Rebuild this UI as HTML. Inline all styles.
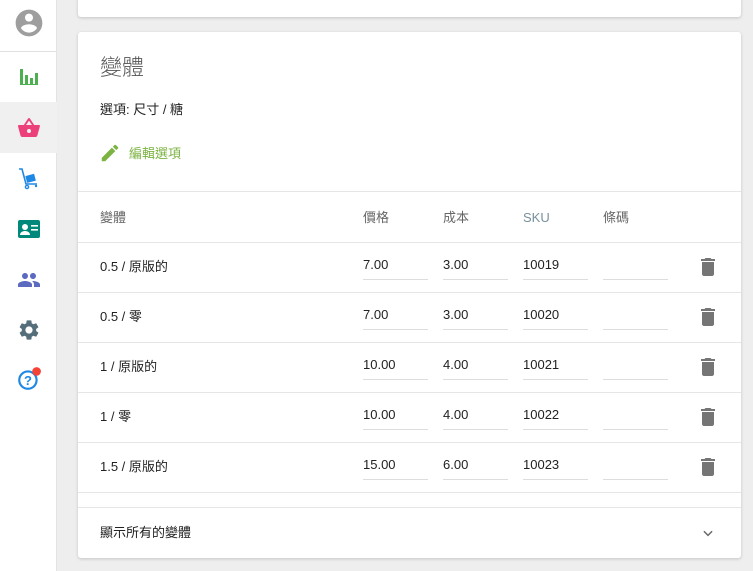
<!DOCTYPE html>
<html><head><meta charset="utf-8"><style>
*{box-sizing:border-box;margin:0;padding:0}
body{width:753px;height:571px;overflow:hidden;background:#eeeeee;font-family:"Liberation Sans","Noto Sans CJK TC",sans-serif;position:relative;color:#222}
.side{position:absolute;left:0;top:0;width:57px;height:571px;background:#fff;border-right:1px solid #e4e4e4}
.ic{position:absolute;left:0;width:57px;height:51px;display:flex;align-items:center;justify-content:center}
.card{position:absolute;left:78px;width:663px;background:#fff;border-radius:3px;box-shadow:0 1px 3px rgba(0,0,0,.18)}
.abs{position:absolute;line-height:16px;white-space:nowrap}
.hr{position:absolute;left:0;right:0;height:1px;background:#e6e6e6}
.t13{font-size:13px}
.inp{position:absolute;width:65px;height:1px;background:#ddd}
</style></head><body>
<div class="side">
 <div class="ic" style="top:0;height:46px"><svg width="32" height="32" viewBox="0 0 24 24"><path fill="#9e9e9e" d="M12 2C6.48 2 2 6.48 2 12s4.48 10 10 10 10-4.48 10-10S17.52 2 12 2zm0 3c1.66 0 3 1.34 3 3s-1.34 3-3 3-3-1.34-3-3 1.34-3 3-3zm0 14.2c-2.5 0-4.710-1.28-6-3.22.03-1.99 4-3.08 6-3.08 1.99 0 5.970 1.09 6 3.08-1.29 1.94-3.5 3.22-6 3.22z"/></svg></div>
 <div class="hr" style="top:51px;background:#e0e0e0"></div>
 <div class="ic" style="top:51px"><svg width="20" height="20" viewBox="0 0 20 20"><path fill="#4caf50" d="M1 2h3v16H1zM6 8h3v10H6zM11 11h3v7h-3zM16 6h3v12h-3z"/><path fill="#4caf50" d="M1 17h18v1H1z"/></svg></div>
 <div class="ic" style="top:102px;background:#f0f0f0"><svg width="24" height="24" viewBox="0 0 24 24"><path fill="#ec407a" d="M17.2 9l-4.4-6.6a1 1 0 00-1.6 0L6.8 9H2a1 1 0 00-1 1.3l2.5 9.3c.2.8 1 1.4 1.900 1.4h13c.9 0 1.7-.6 1.9-1.4l2.6-9.3A1 1 0 0022 9h-4.8zM9 9l3-4.4L15 9H9zm3 8a2 2 0 110-4 2 2 0 010 4z"/></svg></div>
 <div class="ic" style="top:153px"><svg width="24" height="24" viewBox="0 0 24 24"><path fill="none" stroke="#1e88e5" stroke-width="1.6" d="M2 2h3l4 15h11"/><rect x="9" y="8" width="9" height="7" fill="#1e88e5" transform="rotate(-15 13 11)"/><circle cx="10" cy="20" r="1.6" fill="none" stroke="#1e88e5" stroke-width="1.4"/><circle cx="19" cy="19" r="1.2" fill="#1e88e5"/></svg></div>
 <div class="ic" style="top:203px"><svg width="22" height="18" viewBox="0 0 22 18"><rect width="22" height="18" rx="2" fill="#00897b"/><circle cx="7" cy="7" r="3" fill="#fff"/><path fill="#fff" d="M2 15c0-3 3-4 5-4s5 1 5 4z"/><rect x="13" y="5" width="7" height="1.6" fill="#fff"/><rect x="13" y="9" width="7" height="1.6" fill="#fff"/></svg></div>
 <div class="ic" style="top:254px"><svg width="24" height="24" viewBox="0 0 24 24"><path fill="#5c6bc0" d="M16 11c1.66 0 2.99-1.34 2.99-3S17.66 5 16 5c-1.66 0-3 1.34-3 3s1.34 3 3 3zm-8 0c1.66 0 2.99-1.34 2.99-3S9.66 5 8 5C6.34 5 5 6.34 5 8s1.34 3 3 3zm0 2c-2.33 0-7 1.17-7 3.5V19h14v-2.5c0-2.33-4.67-3.5-7-3.5zm8 0c-.29 0-.62.02-.97.05 1.16.84 1.97 1.97 1.97 3.45V19h6v-2.5c0-2.33-4.67-3.5-7-3.5z"/></svg></div>
 <div class="ic" style="top:304px"><svg width="24" height="24" viewBox="0 0 24 24"><path fill="#546e7a" d="M19.14 12.94c.04-.3.06-.61.06-.94 0-.32-.02-.64-.07-.94l2.03-1.58a.49.49 0 00.12-.61l-1.92-3.32a.488.488 0 00-.59-.22l-2.39.96c-.5-.38-1.030-.7-1.62-.94l-.36-2.54a.484.484 0 00-.48-.41h-3.84c-.24 0-.43.17-.47.41l-.36 2.54c-.59.24-1.13.57-1.62.94l-2.39-.96a.49.49 0 00-.59.22L2.74 8.87c-.12.21-.08.47.12.61l2.03 1.58c-.05.3-.09.63-.09.94s.02.64.07.94l-2.03 1.58a.49.49 0 00-.12.61l1.92 3.32c.12.22.37.29.59.22l2.39-.96c.5.38 1.03.7 1.62.94l.36 2.54c.05.24.24.41.48.41h3.84c.24 0 .44-.17.47-.41l.36-2.54c.59-.24 1.13-.56 1.62-.94l2.39.96c.22.08.47 0 .59-.22l1.920-3.32c.12-.22.07-.47-.12-.61l-2.01-1.58zM12 15.6c-1.98 0-3.6-1.62-3.6-3.6s1.62-3.6 3.6-3.6 3.6 1.62 3.6 3.6-1.62 3.6-3.6 3.6z"/></svg></div>
 <div class="ic" style="top:353px"><svg width="26" height="26" viewBox="0 0 24 24"><circle cx="11" cy="13" r="8" fill="none" stroke="#1e88e5" stroke-width="2"/><text x="11" y="17.5" font-size="12" font-weight="bold" fill="#1e88e5" text-anchor="middle" font-family="Liberation Sans">?</text><circle cx="19" cy="5" r="4" fill="#f44336"/></svg></div>
</div>
<div class="card" style="top:-5px;height:22px"></div>
<div class="card" style="top:32px;height:526px">
 <div class="abs" style="left:22px;top:23px;font-size:22px;line-height:26px;color:#555;font-weight:300">變體</div>
 <div class="abs t13" style="left:22px;top:70px">選項: 尺寸 / 糖</div>
 <div class="abs" style="left:21px;top:110px"><svg width="22" height="22" viewBox="0 0 24 24"><path fill="#7cb342" d="M3 17.25V21h3.75L17.81 9.94l-3.75-3.75L3 17.25zM20.71 7.04a1 1 0 000-1.41l-2.34-2.34a1 1 0 00-1.41 0l-1.83 1.83 3.75 3.75 1.83-1.83z"/></svg></div>
 <div class="abs t13" style="left:51px;top:114px;color:#7cb342">編輯選項</div>
 <div class="hr" style="top:159px"></div>
 <div class="abs t13" style="left:22px;top:178px;color:#666">變體</div>
 <div class="abs t13" style="left:285px;top:178px;color:#666">價格</div>
 <div class="abs t13" style="left:365px;top:178px;color:#666">成本</div>
 <div class="abs t13" style="left:445px;top:178px;color:#78909c">SKU</div>
 <div class="abs t13" style="left:525px;top:178px;color:#666">條碼</div>
 <div class="hr" style="top:210px"></div>
 <div id="rows"></div>
 <div class="hr" style="top:475px"></div>
 <div class="abs t13" style="left:22px;top:493px">顯示所有的變體</div>
 <div class="abs" style="left:623px;top:494px"><svg width="14" height="14" viewBox="0 0 24 24"><path fill="none" stroke="#666" stroke-width="2.5" d="M5 9l7 7 7-7"/></svg></div>
</div>
<script>
var d=[["0.5 / 原版的","7.00","3.00","10019"],["0.5 / 零","7.00","3.00","10020"],["1 / 原版的","10.00","4.00","10021"],["1 / 零","10.00","4.00","10022"],["1.5 / 原版的","15.00","6.00","10023"]];
var h="";d.forEach(function(r,i){var t=210+i*50;
h+='<div class="abs t13" style="left:22px;top:'+(t+17)+'px">'+r[0]+'</div>';
[[285,r[1]],[365,r[2]],[445,r[3]],[525,""]].forEach(function(c){h+='<div class="abs t13" style="left:'+c[0]+'px;top:'+(t+15)+'px">'+c[1]+'</div><div class="inp" style="left:'+c[0]+'px;top:'+(t+37)+'px"></div>';});
h+='<div class="abs" style="left:618px;top:'+(t+13)+'px"><svg width="24" height="24" viewBox="0 0 24 24"><path fill="#757575" d="M6 19c0 1.1.9 2 2 2h8c1.1 0 2-.9 2-2V7H6v12zM19 4h-3.5l-1-1h-5l-1 1H5v2h14V4z"/></svg></div>';
h+='<div class="hr" style="top:'+(t+50)+'px"></div>';});
document.getElementById("rows").innerHTML=h;
</script>
</body></html>
